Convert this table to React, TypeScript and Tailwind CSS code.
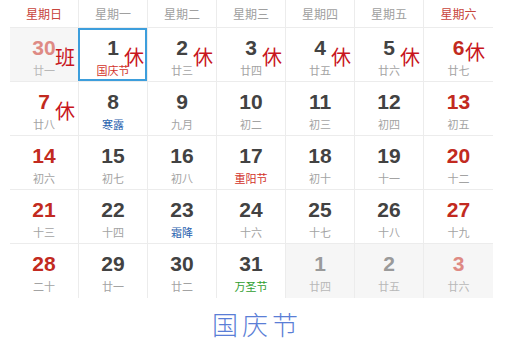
type Day = {
  n: number;
  sub: string;
  subColor?: string;
  other?: boolean;
  rest?: string;
  today?: boolean;
};

const WEEK = ["星期日", "星期一", "星期二", "星期三", "星期四", "星期五", "星期六"];

const ROWS: Day[][] = [
  [
    { n: 30, sub: "廿一", other: true, rest: "班" },
    { n: 1, sub: "国庆节", subColor: "text-[#d2322a]", rest: "休", today: true },
    { n: 2, sub: "廿三", rest: "休" },
    { n: 3, sub: "廿四", rest: "休" },
    { n: 4, sub: "廿五", rest: "休" },
    { n: 5, sub: "廿六", rest: "休" },
    { n: 6, sub: "廿七", rest: "休" },
  ],
  [
    { n: 7, sub: "廿八", rest: "休" },
    { n: 8, sub: "寒露", subColor: "text-[#1f5fae]" },
    { n: 9, sub: "九月" },
    { n: 10, sub: "初二" },
    { n: 11, sub: "初三" },
    { n: 12, sub: "初四" },
    { n: 13, sub: "初五" },
  ],
  [
    { n: 14, sub: "初六" },
    { n: 15, sub: "初七" },
    { n: 16, sub: "初八" },
    { n: 17, sub: "重阳节", subColor: "text-[#d2322a]" },
    { n: 18, sub: "初十" },
    { n: 19, sub: "十一" },
    { n: 20, sub: "十二" },
  ],
  [
    { n: 21, sub: "十三" },
    { n: 22, sub: "十四" },
    { n: 23, sub: "霜降", subColor: "text-[#1f5fae]" },
    { n: 24, sub: "十六" },
    { n: 25, sub: "十七" },
    { n: 26, sub: "十八" },
    { n: 27, sub: "十九" },
  ],
  [
    { n: 28, sub: "二十" },
    { n: 29, sub: "廿一" },
    { n: 30, sub: "廿二" },
    { n: 31, sub: "万圣节", subColor: "text-[#2f9e2f]" },
    { n: 1, sub: "廿四", other: true },
    { n: 2, sub: "廿五", other: true },
    { n: 3, sub: "廿六", other: true },
  ],
];

function numColor(col: number, other?: boolean) {
  const weekend = col === 0 || col === 6;
  if (other) return weekend ? "text-[#de8a84]" : "text-[#9a9a9a]";
  return weekend ? "text-[#c22a20]" : "text-[#424242]";
}

function Cell({ d, col, last }: { d: Day; col: number; last: boolean }) {
  return (
    <div
      className={`relative h-[54px] flex flex-col items-center pt-[8px] ${
        col < 6 ? "border-r border-[#ececec]" : ""
      } ${last ? "" : "border-b border-[#ececec]"} ${d.other ? "bg-[#f6f6f6]" : "bg-white"}`}
    >
      <div
        className={`text-[21px] leading-[24px] font-bold font-['Liberation_Sans',Arial,sans-serif] ${numColor(col, d.other)}`}
      >
        {d.n}
      </div>
      <div
        className={`mt-[3px] text-[11px] leading-[14px] font-['Noto_Sans_CJK_SC',sans-serif] ${
          d.subColor ?? (d.other ? "text-[#b8b8b8]" : "text-[#a3a3a3]")
        }`}
      >
        {d.sub}
      </div>
      {d.rest && (
        <span
          className={`absolute ${col === 6 ? "left-[41px] top-[12px]" : "left-[45px] top-[17px]"} text-[20px] leading-[24px] text-[#c8161d] font-['Noto_Sans_CJK_SC',sans-serif]`}
        >
          {d.rest}
        </span>
      )}
      {d.today && <div className="absolute inset-0 -left-px border-2 border-[#3d9edc]" />}
    </div>
  );
}

export default function App() {
  return (
    <div className="w-[510px] h-[353px] bg-white overflow-hidden">
      <div className="ml-[10px] w-[483px] grid grid-cols-7">
        {WEEK.map((w, i) => (
          <div
            key={w}
            className={`h-[28px] flex items-center justify-center text-[12px] font-['Noto_Sans_CJK_SC',sans-serif] border-b border-[#ececec] ${
              i < 6 ? "border-r" : ""
            } ${i === 0 || i === 6 ? "text-[#c8453c]" : "text-[#a0a0a0]"}`}
          >
            {w}
          </div>
        ))}
        {ROWS.map((row, r) =>
          row.map((d, c) => (
            <Cell key={`${r}-${c}`} d={d} col={c} last={r === ROWS.length - 1} />
          ))
        )}
      </div>
      <div className="h-[52px] flex items-center justify-center">
        <span className="text-[26px] leading-[30px] tracking-[4px] pl-[4px] font-light text-[#5a7ed6] font-['Noto_Sans_CJK_SC',sans-serif]">
          国庆节
        </span>
      </div>
    </div>
  );
}
